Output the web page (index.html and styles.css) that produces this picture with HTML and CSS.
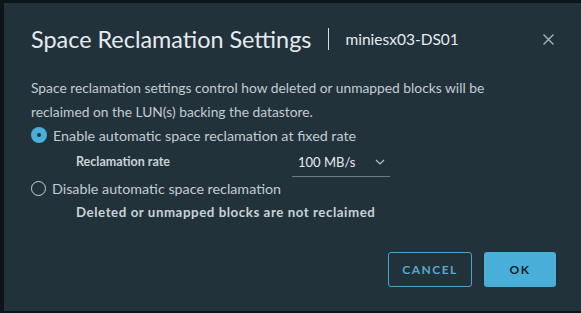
FILE: index.html
```html
<!DOCTYPE html>
<html lang="en">
<head>
    <meta charset="UTF-8">
    <title>Space Reclamation Settings</title>
    <link rel="stylesheet" href="styles.css">
</head>
<body>
    <div class="modal">
        <div class="modal-header">
            <h3 class="modal-title">Space Reclamation Settings</h3>
            <span class="divider"></span>
            <span class="subtitle">miniesx03-DS01</span>
            <button class="close" aria-label="Close">
                <svg width="11" height="11" viewBox="0 0 11 11"><path d="M0.5 0.5 L10.5 10.5 M10.5 0.5 L0.5 10.5" stroke="#aab5bc" stroke-width="1.4" fill="none"/></svg>
            </button>
        </div>

        <div class="modal-body">
            <p class="intro">Space reclamation settings control how deleted or unmapped blocks will be reclaimed on the LUN(s) backing the datastore.</p>

            <label class="radio-row">
                <span class="radio checked"></span>
                <span>Enable automatic space reclamation at fixed rate</span>
            </label>
            <div class="sub-row">
                <span class="sub-label">Reclamation rate</span>
                <div class="select">
                    <span>100 MB/s</span>
                    <svg width="10" height="6" viewBox="0 0 10 6"><path d="M1 1 L5 5 L9 1" stroke="#b8c3c9" stroke-width="1.2" fill="none"/></svg>
                </div>
            </div>

            <label class="radio-row">
                <span class="radio"></span>
                <span>Disable automatic space reclamation</span>
            </label>
            <div class="sub-row note">
                <span class="sub-label">Deleted or unmapped blocks are not reclaimed</span>
            </div>
        </div>

        <div class="modal-footer">
            <button class="btn btn-outline">CANCEL</button>
            <button class="btn btn-primary">OK</button>
        </div>
    </div>
</body>
</html>
```

FILE: styles.css
```css
body {
    margin: 0;
    background-color: #0c1519;
    font-family: 'Lato', 'Open Sans', sans-serif;
    color: #c2ccd2;
    overflow: hidden;
}

.modal {
    margin: 3px 0 0 4px;
    height: 308px;
    background-color: #22323b;
    padding: 21px 25px 0 27px;
    box-sizing: border-box;
}

.modal-header {
    display: flex;
    align-items: center;
    height: 30px;
}

.modal-title {
    margin: 0;
    font-size: 23.4px;
    font-weight: 400;
    color: #e6ebee;
    line-height: 30px;
}

.divider {
    width: 1px;
    height: 22px;
    background-color: #d5dde1;
    margin: 0 16px 0 17px;
}

.subtitle {
    font-size: 15.5px;
    color: #e6ebee;
}

.close {
    margin-left: auto;
    margin-right: 2px;
    background: none;
    border: none;
    padding: 0;
    display: flex;
}

.modal-body {
    margin-top: 22px;
    font-size: 13.8px;
}

.intro {
    margin: 0;
    line-height: 24px;
    width: 500px;
}

.radio-row {
    display: flex;
    align-items: center;
    height: 22px;
    font-size: 14.3px;
}

.radio {
    width: 15px;
    height: 15px;
    border: 1px solid #c9d2d7;
    border-radius: 50%;
    margin: 0 6px 0 0;
    box-sizing: border-box;
    flex-shrink: 0;
    position: relative;
}

.radio.checked {
    border: none;
    background-color: #49afd9;
    width: 16px;
    height: 16px;
    margin-right: 6px;
}

.radio.checked:after {
    content: "";
    position: absolute;
    left: 6px;
    top: 6px;
    width: 4px;
    height: 4px;
    border-radius: 50%;
    background-color: #22323b;
}

.sub-row {
    display: flex;
    align-items: center;
    height: 31px;
    padding-left: 45px;
}

.sub-row.note {
    height: 26px;
}

.sub-label {
    font-weight: 700;
    color: #c9d2d7;
    font-size: 12.5px;
    width: 216px;
    white-space: nowrap;
}

.note .sub-label {
    font-size: 13.3px;
    letter-spacing: 0.55px;
}

.select {
    display: flex;
    align-items: center;
    justify-content: space-between;
    width: 98px;
    height: 30px;
    box-sizing: border-box;
    padding: 2px 5px 0 6px;
    border-bottom: 1px solid #6b7b84;
    color: #e6ebee;
    font-size: 13px;
}

.modal-footer {
    display: flex;
    justify-content: flex-end;
    gap: 12px;
    margin-top: 27px;
}

.btn {
    height: 35px;
    border-radius: 3px;
    font-family: inherit;
    font-size: 12px;
    font-weight: 700;
    letter-spacing: 1.5px;
    cursor: pointer;
}

.btn-outline {
    width: 84px;
    background: none;
    border: 1px solid #4aa3c8;
    color: #57a9cc;
}

.btn-primary {
    width: 72px;
    background-color: #49afd9;
    border: none;
    color: #0e1d24;
}
```
